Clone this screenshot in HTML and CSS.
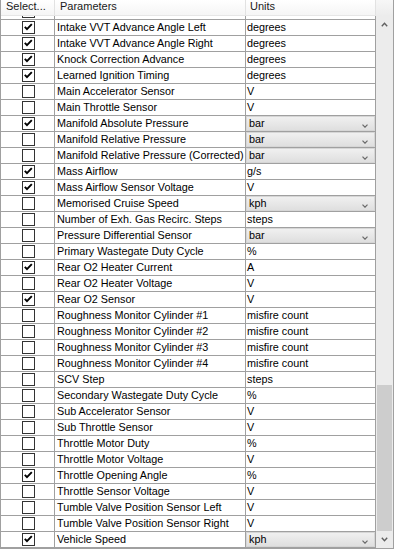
FILE: index.html
```html
<!DOCTYPE html>
<html lang="en">
<head>
  <meta charset="UTF-8">
  <title>Parameters</title>
  <link rel="stylesheet" href="styles.css">
</head>
<body>
  <div class="grid">
    <div class="view">
      <div class="head">
        <div class="hc c1">Select...</div>
        <div class="hc c2">Parameters</div>
        <div class="hc c3">Units</div>
      </div>
      <div class="body">
        <div class="rows" id="rows"></div>
      </div>
    </div>
    <div class="vscroll">
      <div class="corner"></div>
      <div class="sbtn">
        <svg width="7" height="5" viewBox="0 0 7 5"><path d="M0.8 4.2 L3.5 1.3 L6.2 4.2" fill="none" stroke="#606060" stroke-width="1.4"/></svg>
      </div>
      <div class="track"><div class="thumb"></div></div>
      <div class="sbtn">
        <svg width="7" height="5" viewBox="0 0 7 5"><path d="M0.8 0.8 L3.5 3.7 L6.2 0.8" fill="none" stroke="#606060" stroke-width="1.4"/></svg>
      </div>
    </div>
  </div>

  <script>
    // [nama, dicentang, satuan, combo] - baris pertama tersembunyi di bawah header
    const data = [
      ["", false, "", false],
      ["Intake VVT Advance Angle Left", true, "degrees", false],
      ["Intake VVT Advance Angle Right", true, "degrees", false],
      ["Knock Correction Advance", true, "degrees", false],
      ["Learned Ignition Timing", true, "degrees", false],
      ["Main Accelerator Sensor", false, "V", false],
      ["Main Throttle Sensor", false, "V", false],
      ["Manifold Absolute Pressure", true, "bar", true],
      ["Manifold Relative Pressure", false, "bar", true],
      ["Manifold Relative Pressure (Corrected)", false, "bar", true],
      ["Mass Airflow", true, "g/s", false],
      ["Mass Airflow Sensor Voltage", true, "V", false],
      ["Memorised Cruise Speed", false, "kph", true],
      ["Number of Exh. Gas Recirc. Steps", false, "steps", false],
      ["Pressure Differential Sensor", false, "bar", true],
      ["Primary Wastegate Duty Cycle", false, "%", false],
      ["Rear O2 Heater Current", true, "A", false],
      ["Rear O2 Heater Voltage", false, "V", false],
      ["Rear O2 Sensor", true, "V", false],
      ["Roughness Monitor Cylinder #1", false, "misfire count", false],
      ["Roughness Monitor Cylinder #2", false, "misfire count", false],
      ["Roughness Monitor Cylinder #3", false, "misfire count", false],
      ["Roughness Monitor Cylinder #4", false, "misfire count", false],
      ["SCV Step", false, "steps", false],
      ["Secondary Wastegate Duty Cycle", false, "%", false],
      ["Sub Accelerator Sensor", false, "V", false],
      ["Sub Throttle Sensor", false, "V", false],
      ["Throttle Motor Duty", false, "%", false],
      ["Throttle Motor Voltage", false, "V", false],
      ["Throttle Opening Angle", true, "%", false],
      ["Throttle Sensor Voltage", false, "V", false],
      ["Tumble Valve Position Sensor Left", false, "V", false],
      ["Tumble Valve Position Sensor Right", false, "V", false],
      ["Vehicle Speed", true, "kph", true]
    ];

    const check = '<svg width="11" height="11" viewBox="0 0 11 11"><path d="M1.8 4.8 L4 7.2 L8.8 2.2" fill="none" stroke="#000" stroke-width="1.9"/></svg>';
    const chevron = '<svg class="chev" width="6" height="4" viewBox="0 0 6 4"><path d="M0.5 0.6 L3 3.2 L5.5 0.6" fill="none" stroke="#6a6a6a" stroke-width="1.2"/></svg>';

    let html = "";
    data.forEach(item => {
      const [nama, on, unit, combo] = item;
      const unitCell = combo
        ? `<div class="cell c3 has-combo"><div class="combo"><span>${unit}</span>${chevron}</div></div>`
        : `<div class="cell c3">${unit}</div>`;
      html += `<div class="row">
        <div class="cell c1"><div class="cb">${on ? check : ""}</div></div>
        <div class="cell c2">${nama}</div>
        ${unitCell}
      </div>`;
    });
    document.getElementById("rows").innerHTML = html;
  </script>
</body>
</html>
```

FILE: styles.css
```css
body {
  margin: 0;
  background: #fff;
  font-family: "Liberation Sans", Arial, sans-serif;
  font-size: 11px;
  color: #000;
}
.grid {
  display: flex;
  width: 394px;
  height: 549px;
  box-sizing: border-box;
  border: 1px solid #a0a0a0;
  border-top: none;
}
.view {
  width: 375px;
  display: flex;
  flex-direction: column;
}
.head {
  display: flex;
  height: 16px;
  box-sizing: border-box;
  border-bottom: 1px solid #e6e6e6;
  background: linear-gradient(#ffffff, #f5f5f5);
  position: relative;
  z-index: 1;
}
.hc {
  box-sizing: border-box;
  border-right: 1px solid #e2e2e2;
  padding-left: 5px;
  line-height: 13px;
  color: #1a1a1a;
  white-space: nowrap;
  overflow: hidden;
}
.hc.c3 {
  padding-left: 4px;
}
.c1 { width: 54px; }
.c2 { width: 191px; }
.c3 { width: 130px; }

.body {
  flex: 1;
  overflow: hidden;
}
.rows {
  margin-top: -12px;
}
.row {
  display: flex;
  height: 16px;
  box-sizing: border-box;
  border-bottom: 1px solid #a0a0a0;
}
.cell {
  box-sizing: border-box;
  height: 15px;
  line-height: 15px;
  font-size: 10.8px;
  border-right: 1px solid #a0a0a0;
  white-space: nowrap;
  overflow: hidden;
}
.cell.c2 {
  padding-left: 2px;
}
.cell.c3 {
  padding-left: 1px;
}
.cell.has-combo {
  padding-left: 0;
}
.cb {
  width: 13px;
  height: 13px;
  box-sizing: border-box;
  margin: 1px 0 0 21px;
  border: 1px solid #333;
  background: #fff;
}
.cb svg {
  display: block;
}
.combo {
  display: flex;
  justify-content: space-between;
  height: 15px;
  box-sizing: border-box;
  padding-left: 2px;
  line-height: 13px;
  border: 1px solid #d6d6d6;
  background: linear-gradient(#f0f0f0, #dfdfdf);
}
.chev {
  align-self: flex-end;
  margin: 0 6px 2px 0;
}

.vscroll {
  width: 17px;
  display: flex;
  flex-direction: column;
  background: #ececec;
}
.corner {
  height: 16px;
  background: linear-gradient(#f7f7f7, #ececec);
}
.sbtn {
  height: 17px;
  display: flex;
  align-items: center;
  justify-content: center;
}
.track {
  flex: 1;
  display: flex;
  flex-direction: column;
  justify-content: flex-end;
}
.thumb {
  height: 146px;
  margin: 0 1px;
  background: #cdcdcd;
}
```
